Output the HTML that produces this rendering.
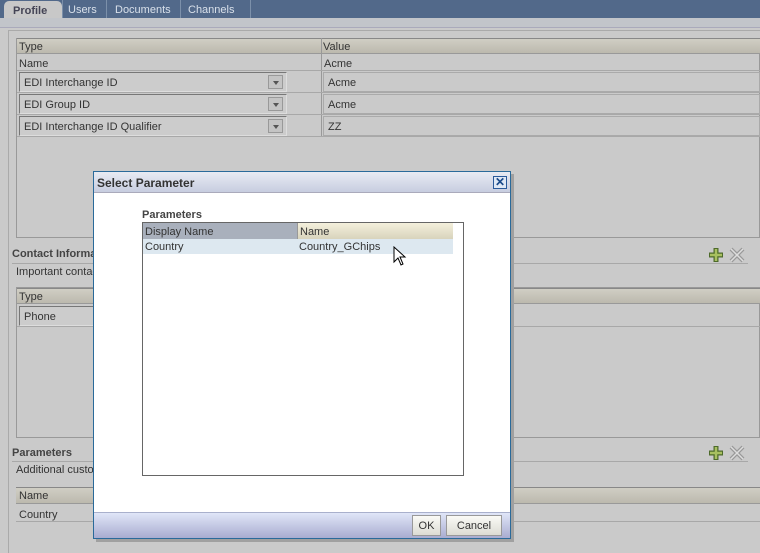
<!DOCTYPE html>
<html><head><style>
*{margin:0;padding:0;box-sizing:border-box}
html,body{width:760px;height:553px;overflow:hidden}
body{background:#cacaca;font-family:"Liberation Sans",Tahoma,sans-serif;font-size:11px;color:#333;position:relative}
.a{position:absolute}
.hdr{background:linear-gradient(#d0cec4,#bcb9ae);border-top:1px solid #888;border-bottom:1px solid #999}
.line{background:#a8a8a8;height:1px}
.combo{border:1px solid #777;border-right-color:#ddd;border-bottom-color:#ddd;background:#ccc;padding:4px 4px 0;height:20px;color:#333}
.dd{position:absolute;right:3px;top:2px;width:15px;height:14px;background:#c4c4c4;border:1px solid #999}
.dd:after{content:"";position:absolute;left:4px;top:5px;border:3px solid transparent;border-top:4px solid #555}
.val{border:1px solid #aaa;padding:4px 4px 0;height:20px}
.b{font-weight:bold;color:#444;font-size:11px}
</style></head><body>
<div class="a" style="left:0;top:0;width:760px;height:18px;background:#52698a"></div>
<div class="a" style="left:4px;top:1px;width:58px;height:19px;background:#c8c8c8;border-radius:5px 5px 0 0;font-weight:bold;color:#445;padding:4px 0 0 9px">Profile</div>
<div class="a" style="left:68px;top:4px;color:#d8e0ea">Users</div>
<div class="a" style="left:62px;top:0;width:1px;height:18px;background:#7c90aa"></div>
<div class="a" style="left:106px;top:0;width:1px;height:18px;background:#7c90aa"></div>
<div class="a" style="left:115px;top:4px;color:#d8e0ea">Documents</div>
<div class="a" style="left:180px;top:0;width:1px;height:18px;background:#7c90aa"></div>
<div class="a" style="left:188px;top:4px;color:#d8e0ea">Channels</div>
<div class="a" style="left:250px;top:0;width:1px;height:18px;background:#7c90aa"></div>
<div class="a" style="left:0;top:18px;width:760px;height:10px;background:#c2c5ca;border-bottom:1px solid #aab"></div>
<div class="a" style="left:8px;top:30px;width:752px;height:523px;border-left:1px solid #aaa;border-top:1px solid #aaa"></div>

<div class="a" style="left:16px;top:38px;width:744px;height:200px;border:1px solid #999"></div>
<div class="a hdr" style="left:17px;top:38px;width:743px;height:16px"></div>
<div class="a" style="left:19px;top:41px">Type</div><div class="a" style="left:323px;top:41px">Value</div>
<div class="a" style="left:321px;top:38px;width:1px;height:99px;background:#999"></div>
<div class="a" style="left:19px;top:58px">Name</div><div class="a" style="left:324px;top:58px">Acme</div>
<div class="a line" style="left:17px;top:70px;width:743px"></div>
<div class="a combo" style="left:19px;top:72px;width:268px">EDI Interchange ID<span class="dd"></span></div>
<div class="a val" style="left:323px;top:72px;width:437px">Acme</div>
<div class="a line" style="left:17px;top:92px;width:743px"></div>
<div class="a combo" style="left:19px;top:94px;width:268px">EDI Group ID<span class="dd"></span></div>
<div class="a val" style="left:323px;top:94px;width:437px">Acme</div>
<div class="a line" style="left:17px;top:114px;width:743px"></div>
<div class="a combo" style="left:19px;top:116px;width:268px">EDI Interchange ID Qualifier<span class="dd"></span></div>
<div class="a val" style="left:323px;top:116px;width:437px">ZZ</div>
<div class="a line" style="left:17px;top:136px;width:743px"></div>

<div class="a b" style="left:12px;top:248px">Contact Information</div>
<div class="a line" style="left:12px;top:263px;width:736px"></div>
<div class="a" style="left:16px;top:266px">Important contacts</div>
<div class="a" style="left:16px;top:287px;width:744px;height:151px;border:1px solid #999"></div>
<div class="a hdr" style="left:17px;top:288px;width:743px;height:16px"></div>
<div class="a" style="left:19px;top:291px">Type</div>
<div class="a combo" style="left:19px;top:306px;width:300px">Phone</div>
<div class="a line" style="left:17px;top:326px;width:743px"></div>

<div class="a b" style="left:12px;top:447px">Parameters</div>
<div class="a line" style="left:12px;top:461px;width:736px"></div>
<div class="a" style="left:16px;top:464px">Additional custom parameters</div>
<div class="a hdr" style="left:16px;top:487px;width:744px;height:17px"></div>
<div class="a" style="left:19px;top:490px">Name</div>
<div class="a" style="left:19px;top:509px">Country</div>
<div class="a line" style="left:16px;top:521px;width:744px"></div>

<svg class="a" style="left:706px;top:246px" width="40" height="18"><path d="M3 9h14M10 2v14" stroke="#4d6a2a" stroke-width="5"/><path d="M4 9h12M10 3v12" stroke="#a8c060" stroke-width="2.5"/><path d="M25 3l12 12M37 3L25 15" stroke="#999" stroke-width="4"/><path d="M25 3l12 12M37 3L25 15" stroke="#ddd" stroke-width="1.5"/></svg>
<svg class="a" style="left:706px;top:444px" width="40" height="18"><path d="M3 9h14M10 2v14" stroke="#4d6a2a" stroke-width="5"/><path d="M4 9h12M10 3v12" stroke="#a8c060" stroke-width="2.5"/><path d="M25 3l12 12M37 3L25 15" stroke="#999" stroke-width="4"/><path d="M25 3l12 12M37 3L25 15" stroke="#ddd" stroke-width="1.5"/></svg>

<div class="a" style="left:96px;top:174px;width:418px;height:368px;background:#a0a0a0"></div>
<div class="a" style="left:93px;top:171px;width:418px;height:368px;background:#fff;border:1px solid #2a6a9a"></div>
<div class="a" style="left:94px;top:172px;width:416px;height:21px;background:linear-gradient(#e8ebf3,#c7cde0);border-bottom:1px solid #aab"></div>
<div class="a" style="left:97px;top:176px;font-size:12px;font-weight:bold;color:#333">Select Parameter</div>
<div class="a" style="left:493px;top:176px;width:14px;height:13px;border:1px solid #2a5a9a;background:#dfe8f5;color:#1a4a8a;font-size:12px;font-weight:bold;line-height:11px;text-align:center">✕</div>
<div class="a b" style="left:142px;top:209px">Parameters</div>
<div class="a" style="left:142px;top:222px;width:322px;height:254px;border:1px solid #666"></div>
<div class="a" style="left:143px;top:223px;width:154px;height:16px;background:#a9b0bc;padding:3px 2px 0;color:#333">Display Name</div>
<div class="a" style="left:297px;top:223px;width:156px;height:16px;background:linear-gradient(#f4f0dc,#d8d3bc);border-left:1px solid #999;padding:3px 2px 0;color:#333">Name</div>
<div class="a" style="left:143px;top:239px;width:310px;height:15px;background:#dde8f0"></div>
<div class="a" style="left:145px;top:241px">Country</div>
<div class="a" style="left:299px;top:241px">Country_GChips</div>
<svg class="a" style="left:393px;top:246px" width="14" height="22"><path d="M1 1v15l4-4 3 7 2-1-3-7h5z" fill="#fff" stroke="#000"/></svg>
<div class="a" style="left:94px;top:512px;width:416px;height:26px;background:linear-gradient(#e0e6f8,#a9acd0);border-top:1px solid #a9b0cc"></div>
<div class="a" style="left:412px;top:515px;width:29px;height:21px;background:linear-gradient(#fafaf6,#dcdcd4);border:1px solid #999;text-align:center;line-height:20px;color:#333">OK</div>
<div class="a" style="left:446px;top:515px;width:56px;height:21px;background:linear-gradient(#fafaf6,#dcdcd4);border:1px solid #999;text-align:center;line-height:20px;color:#333">Cancel</div>
</body></html>
